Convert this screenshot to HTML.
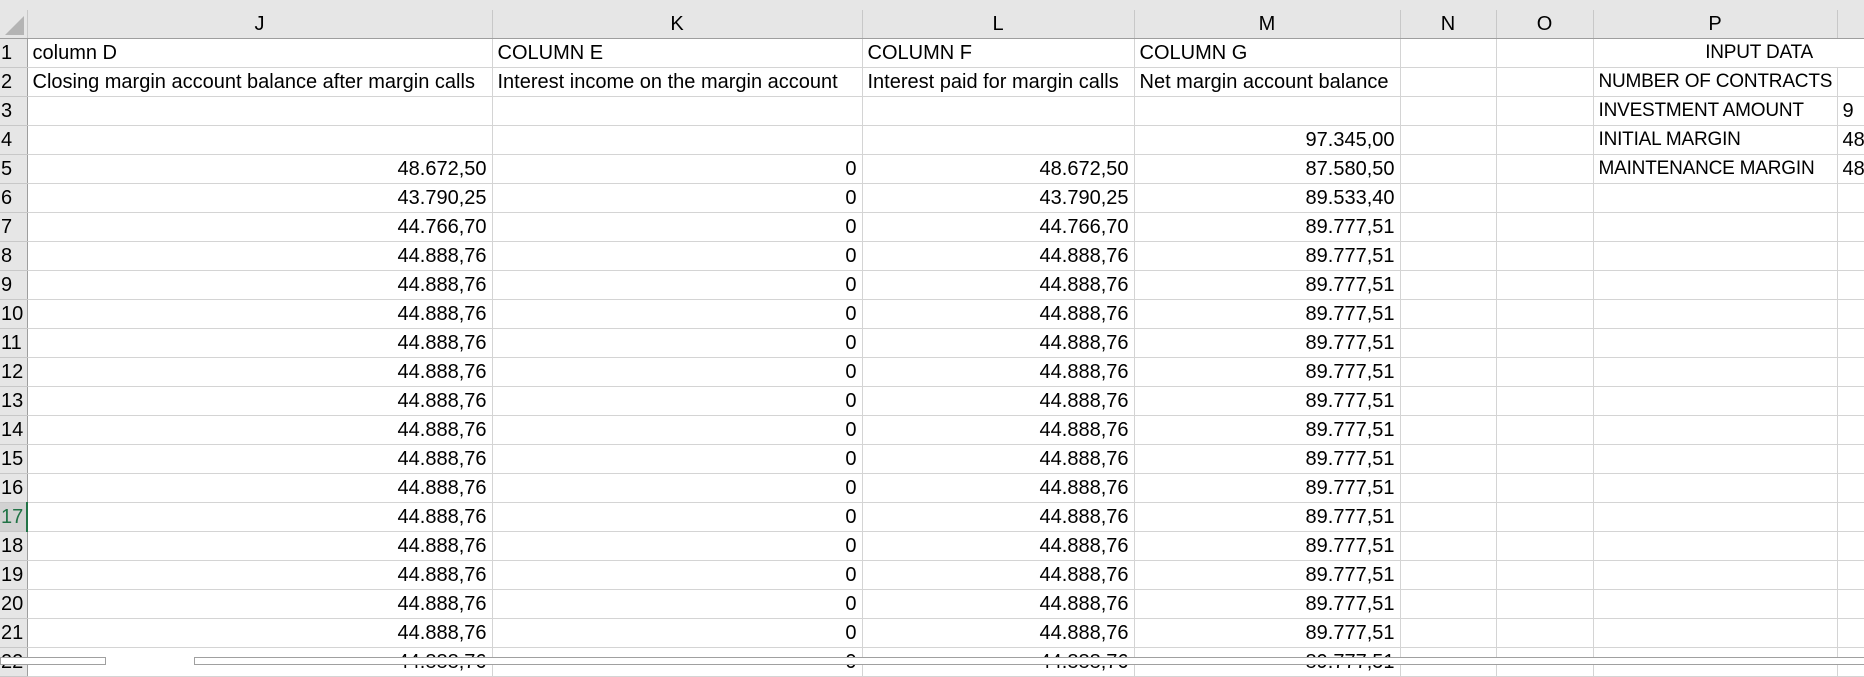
<!DOCTYPE html>
<html><head><meta charset="utf-8"><style>
html,body{margin:0;padding:0;width:1864px;height:661px;overflow:hidden;background:#fff;font-family:"Liberation Sans",sans-serif;}
.top{position:absolute;left:0;top:0;width:1864px;height:10px;background:#e6e6e6;}
table{position:absolute;left:0;top:10px;width:1864px;border-collapse:collapse;table-layout:fixed;font-size:20px;color:#000;}
td{height:28px;border-right:1px solid #d4d4d4;border-bottom:1px solid #d4d4d4;padding:0 5px;white-space:nowrap;overflow:hidden;line-height:28px;box-sizing:border-box;vertical-align:bottom;}
tr.h td{background:#e6e6e6;text-align:center;border-right:1px solid #c8c8c8;border-bottom:1px solid #9e9e9e;height:28px;font-size:20px;}
td.rh{background:#e6e6e6;border-right:1px solid #9e9e9e;border-bottom:1px solid #c8c8c8;padding:0 0 0 1px;text-align:left;}
td.sel{background:#d2d2d2;color:#217346;border-right:2px solid #217346;}
td.p{font-size:19px;letter-spacing:-0.2px;}
.r{text-align:right;}
.corner{position:relative}
.corner:after{content:"";position:absolute;right:3px;bottom:3px;border-style:solid;border-width:0 0 19px 19px;border-color:transparent transparent #b4b4b4 transparent;}
.nb{border-right:none}
.band{position:absolute;left:0;top:657px;width:1864px;height:4px;background:#fff;}
.sb1{position:absolute;left:0;top:657px;width:104px;height:6px;border:1px solid #a0a0a0;background:#fff;}
.sb2{position:absolute;left:194px;top:657px;width:1680px;height:6px;border:1px solid #a0a0a0;background:#fff;}
</style></head><body>
<div class="top"></div>
<table>
<colgroup><col style="width:27px"><col style="width:465px"><col style="width:370px"><col style="width:272px"><col style="width:266px"><col style="width:96px"><col style="width:97px"><col style="width:244px"><col style="width:27px"></colgroup>
<tr class="h"><td class="corner"></td><td>J</td><td>K</td><td>L</td><td>M</td><td>N</td><td>O</td><td>P</td><td></td></tr>
<tr><td class="rh">1</td><td>column D</td><td>COLUMN E</td><td>COLUMN F</td><td>COLUMN G</td><td></td><td></td><td class="nb p" style="text-align:right;padding-right:24px">INPUT DATA</td><td></td></tr>
<tr><td class="rh">2</td><td>Closing margin account balance after margin calls</td><td>Interest income on the margin account</td><td>Interest paid for margin calls</td><td>Net margin account balance</td><td></td><td></td><td class="p">NUMBER OF CONTRACTS</td><td></td></tr>
<tr><td class="rh">3</td><td></td><td></td><td></td><td></td><td></td><td></td><td class="p">INVESTMENT AMOUNT</td><td>9</td></tr>
<tr><td class="rh">4</td><td></td><td></td><td></td><td class="r">97.345,00</td><td></td><td></td><td class="p">INITIAL MARGIN</td><td>48</td></tr>
<tr><td class="rh">5</td><td class="r">48.672,50</td><td class="r">0</td><td class="r">48.672,50</td><td class="r">87.580,50</td><td></td><td></td><td class="p">MAINTENANCE MARGIN</td><td>48</td></tr>
<tr><td class="rh">6</td><td class="r">43.790,25</td><td class="r">0</td><td class="r">43.790,25</td><td class="r">89.533,40</td><td></td><td></td><td></td><td></td></tr>
<tr><td class="rh">7</td><td class="r">44.766,70</td><td class="r">0</td><td class="r">44.766,70</td><td class="r">89.777,51</td><td></td><td></td><td></td><td></td></tr>
<tr><td class="rh">8</td><td class="r">44.888,76</td><td class="r">0</td><td class="r">44.888,76</td><td class="r">89.777,51</td><td></td><td></td><td></td><td></td></tr>
<tr><td class="rh">9</td><td class="r">44.888,76</td><td class="r">0</td><td class="r">44.888,76</td><td class="r">89.777,51</td><td></td><td></td><td></td><td></td></tr>
<tr><td class="rh">10</td><td class="r">44.888,76</td><td class="r">0</td><td class="r">44.888,76</td><td class="r">89.777,51</td><td></td><td></td><td></td><td></td></tr>
<tr><td class="rh">11</td><td class="r">44.888,76</td><td class="r">0</td><td class="r">44.888,76</td><td class="r">89.777,51</td><td></td><td></td><td></td><td></td></tr>
<tr><td class="rh">12</td><td class="r">44.888,76</td><td class="r">0</td><td class="r">44.888,76</td><td class="r">89.777,51</td><td></td><td></td><td></td><td></td></tr>
<tr><td class="rh">13</td><td class="r">44.888,76</td><td class="r">0</td><td class="r">44.888,76</td><td class="r">89.777,51</td><td></td><td></td><td></td><td></td></tr>
<tr><td class="rh">14</td><td class="r">44.888,76</td><td class="r">0</td><td class="r">44.888,76</td><td class="r">89.777,51</td><td></td><td></td><td></td><td></td></tr>
<tr><td class="rh">15</td><td class="r">44.888,76</td><td class="r">0</td><td class="r">44.888,76</td><td class="r">89.777,51</td><td></td><td></td><td></td><td></td></tr>
<tr><td class="rh">16</td><td class="r">44.888,76</td><td class="r">0</td><td class="r">44.888,76</td><td class="r">89.777,51</td><td></td><td></td><td></td><td></td></tr>
<tr><td class="rh sel">17</td><td class="r">44.888,76</td><td class="r">0</td><td class="r">44.888,76</td><td class="r">89.777,51</td><td></td><td></td><td></td><td></td></tr>
<tr><td class="rh">18</td><td class="r">44.888,76</td><td class="r">0</td><td class="r">44.888,76</td><td class="r">89.777,51</td><td></td><td></td><td></td><td></td></tr>
<tr><td class="rh">19</td><td class="r">44.888,76</td><td class="r">0</td><td class="r">44.888,76</td><td class="r">89.777,51</td><td></td><td></td><td></td><td></td></tr>
<tr><td class="rh">20</td><td class="r">44.888,76</td><td class="r">0</td><td class="r">44.888,76</td><td class="r">89.777,51</td><td></td><td></td><td></td><td></td></tr>
<tr><td class="rh">21</td><td class="r">44.888,76</td><td class="r">0</td><td class="r">44.888,76</td><td class="r">89.777,51</td><td></td><td></td><td></td><td></td></tr>
<tr><td class="rh">22</td><td class="r">44.888,76</td><td class="r">0</td><td class="r">44.888,76</td><td class="r">89.777,51</td><td></td><td></td><td></td><td></td></tr>
</table>
<div class="band"></div>
<div class="sb1"></div><div class="sb2"></div>
</body></html>
